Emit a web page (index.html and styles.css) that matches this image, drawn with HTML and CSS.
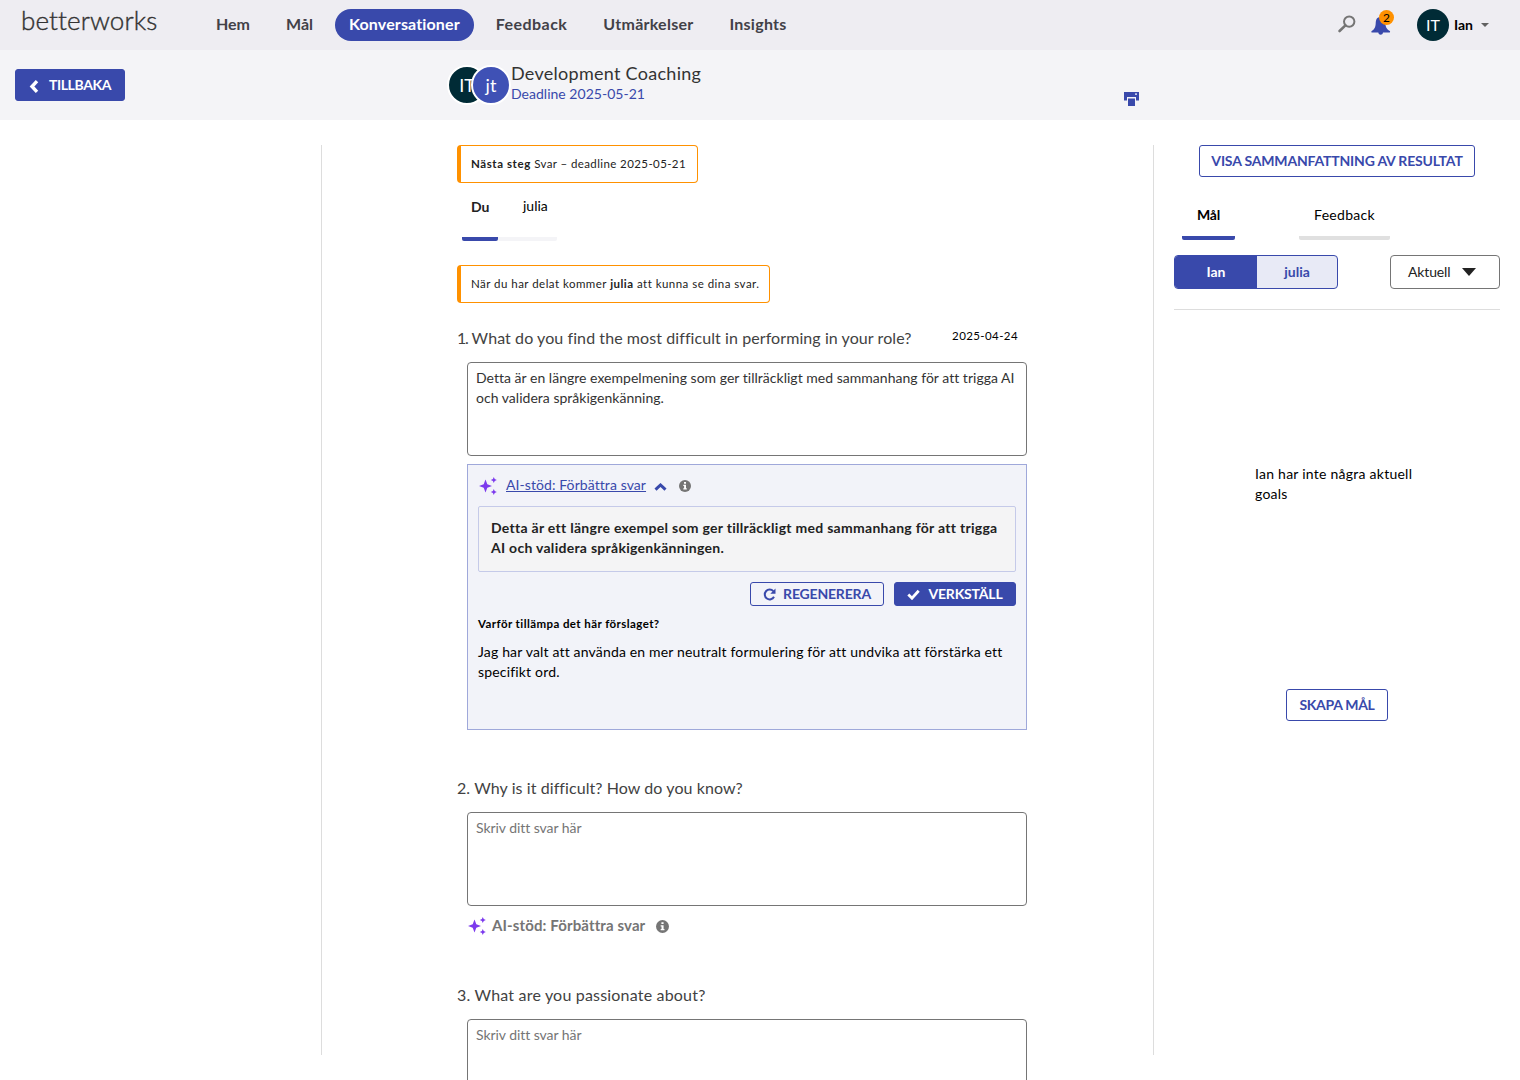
FILE: index.html
```html
<!DOCTYPE html>
<html lang="sv">
<head>
<meta charset="utf-8">
<title>Development Coaching</title>
<link rel="stylesheet" href="styles.css">
</head>
<body>
<svg class="sprite" width="0" height="0" aria-hidden="true">
  <symbol id="sparkle" viewBox="0 0 18 18">
    <path d="M6.5 2.600 8.300 7.200 13 9 8.300 10.800 6.500 15.400 4.700 10.800 0 9 4.700 7.200Z"/>
    <path d="M14.800 0 15.700 2.100 17.800 3 15.700 3.900 14.800 6 13.900 3.900 11.800 3 13.900 2.100Z"/>
    <path d="M14.800 12 15.700 14.100 17.800 15 15.700 15.900 14.800 18 13.900 15.900 11.800 15 13.900 14.100Z"/>
  </symbol>
  <symbol id="info" viewBox="0 0 12 12">
    <circle cx="6" cy="6" r="6"/>
    <path fill="#fff" d="M5 2h2v1.700H5zM4.300 4.800H7v3.400h.8v1.200H4.300V8.200h.8V6h-.8z"/>
  </symbol>
</svg>

<header class="topbar">
  <div class="logo">betterworks</div>
  <nav class="nav">
    <a>Hem</a>
    <a>Mål</a>
    <a class="active">Konversationer</a>
    <a class="wide">Feedback</a>
    <a>Utmärkelser</a>
    <a>Insights</a>
  </nav>
  <div class="tools">
    <svg class="search" width="18" height="18" viewBox="0 0 18 18"><circle cx="11.200" cy="6.600" r="5.200" fill="none" stroke="#757575" stroke-width="2"/><path d="M7.400 10.400 1.600 16" stroke="#757575" stroke-width="2.600" stroke-linecap="round"/></svg>
    <div class="bell">
      <svg width="20" height="19" viewBox="0 0 20 19"><path fill="#3949ab" d="M9 0c3.700.4 5.200 3 5.400 6.500.2 3.300 1 5.500 4.400 7.500.6.600.3 1.600-.6 1.600h-6.200c-.3 3-4.300 3-4.700 0H1.200C.3 15.600 0 14.600.7 14 4 12 4.400 9.800 4.700 6.500 4.900 3 5.500.4 9 0Z"/></svg>
      <span class="badge">2</span>
    </div>
    <div class="avatar me">IT</div>
    <span class="me-name">Ian</span>
    <i class="caret"></i>
  </div>
</header>

<section class="subbar">
  <button class="btn solid back"><svg width="10" height="14" viewBox="0 0 10 14"><path d="M8 2.200 3 7.500l5 5.300" fill="none" stroke="#fff" stroke-width="3.400"/></svg>TILLBAKA</button>
  <div class="conversation">
    <div class="pair"><div class="avatar">IT</div><div class="avatar second">jt</div></div>
    <div class="heading">
      <h1>Development Coaching</h1>
      <p>Deadline 2025-05-21</p>
    </div>
  </div>
  <svg class="print" width="15" height="14" viewBox="0 0 15 14"><path fill="#3949ab" d="M0 0h15v8.500h-3V5H3v3.500H0zM4 6.500h7V14H4z"/><path fill="#c5cae9" d="M11 1.300h2v1.700h-2z"/></svg>
</section>

<main class="columns">
  <aside class="left"></aside>
  <section class="center">
    <div class="note n1"><b>Nästa steg</b> Svar – deadline 2025-05-21</div>
    <div class="people">
      <div class="person on">Du</div>
      <div class="person">julia</div>
    </div>
    <div class="note n2">När du har delat kommer <b>julia</b> att kunna se dina svar.</div>

    <article class="question q1">
      <div class="q-head"><h2><span class="num">1.</span> What do you find the most difficult in performing in your role?</h2><time>2025-04-24</time></div>
      <div class="answer">Detta är en längre exempelmening som ger tillräckligt med sammanhang för att trigga AI<br>och validera språkigenkänning.</div>
      <div class="ai-panel">
        <div class="ai-row">
          <svg class="sparkle" width="18" height="18"><use href="#sparkle"/></svg>
          <a>AI-stöd: Förbättra svar</a>
          <svg class="chev" width="13" height="8" viewBox="0 0 13 8"><path d="M1.500 6.700 6.500 2l5 4.700" fill="none" stroke="#3949ab" stroke-width="3"/></svg>
          <svg class="info" width="12" height="12"><use href="#info"/></svg>
        </div>
        <div class="suggestion">Detta är ett längre exempel som ger tillräckligt med sammanhang för att trigga<br>AI och validera språkigenkänningen.</div>
        <div class="actions">
          <button class="btn outline small"><svg width="13" height="13" viewBox="0 0 13 13"><path d="M10.300 3.200A4.900 4.900 0 1 0 11 8.800" fill="none" stroke="#3949ab" stroke-width="2"/><path fill="#3949ab" d="M12.500.500v5.200H7.300z"/></svg>REGENERERA</button>
          <button class="btn solid small"><svg width="13" height="11" viewBox="0 0 13 11"><path d="M1.300 5.500 5 9.200 11.700 1.800" fill="none" stroke="#fff" stroke-width="2.800"/></svg>VERKSTÄLL</button>
        </div>
        <h3>Varför tillämpa det här förslaget?</h3>
        <p class="why">Jag har valt att använda en mer neutralt formulering för att undvika att förstärka ett<br>specifikt ord.</p>
      </div>
    </article>

    <article class="question q2">
      <div class="q-head"><h2>2. Why is it difficult? How do you know?</h2></div>
      <div class="answer empty">Skriv ditt svar här</div>
      <div class="ai-row off">
        <svg class="sparkle" width="18" height="18"><use href="#sparkle"/></svg>
        <span>AI-stöd: Förbättra svar</span>
        <svg class="info" width="13" height="13"><use href="#info"/></svg>
      </div>
    </article>

    <article class="question q3">
      <div class="q-head"><h2>3. What are you passionate about?</h2></div>
      <div class="answer empty">Skriv ditt svar här</div>
    </article>
  </section>

  <aside class="right">
    <button class="btn outline summary">VISA SAMMANFATTNING AV RESULTAT</button>
    <div class="tabs"><div class="tab on">Mål</div><div class="tab">Feedback</div></div>
    <div class="filters">
      <div class="toggle"><div class="on">Ian</div><div>julia</div></div>
      <div class="select">Aktuell<i></i></div>
    </div>
    <p class="none">Ian har inte några aktuell<br>goals</p>
    <button class="btn outline create">SKAPA MÅL</button>
  </aside>
</main>
</body>
</html>
```
FILE: styles.css
```css
* { box-sizing: border-box; }
body { margin: 0; width: 1520px; height: 1080px; overflow: hidden; background: #fff; color: #000; font: 14px/20px Lato, "Open Sans", sans-serif; }
h1, h2, h3, p { margin: 0; font-weight: 400; }
.sprite { position: absolute; }
svg { flex: none; display: block; }

.topbar { display: flex; height: 50px; background: #eeedf2; }
.logo { width: 202px; padding: 7px 0 0 21px; font-size: 26px; line-height: 27px; font-weight: 300; letter-spacing: .1px; color: #333; -webkit-text-stroke: .4px #333; }
.nav { display: flex; gap: 8px; padding-top: 9px; }
.nav a { height: 32px; padding: 0 14px; border-radius: 16px; font-size: 16px; line-height: 29px; font-weight: 700; letter-spacing: .25px; color: #424148; white-space: nowrap; }
.nav a:nth-child(-n+2) { letter-spacing: 0; }
.nav .active { background: #3949ab; color: #fff; letter-spacing: .13px; }
.nav .wide { letter-spacing: .45px; }
.tools { display: flex; align-items: center; margin-left: auto; padding-right: 31px; }
.search { margin: 0 15px 2px 0; }
.bell { position: relative; width: 20px; margin-right: 26px; padding-top: 2px; }
.badge { position: absolute; left: 8px; top: -5px; width: 15px; height: 15px; border-radius: 50%; background: #ff9100; font-size: 12px; line-height: 15px; text-align: center; }
.avatar { display: flex; align-items: center; justify-content: center; border-radius: 50%; background: #002b36; color: #fff; font-size: 16px; }
.me { width: 32px; height: 32px; padding-bottom: 1px; }
.me-name { margin: -1px 0 0 5px; font-weight: 700; }
.caret { margin-left: 8px; border: 4px solid transparent; border-top-color: #616161; border-bottom: 0; }

.subbar { display: flex; height: 70px; background: #f4f4f7; }
.btn { display: flex; align-items: center; justify-content: center; border: 1px solid #3949ab; border-radius: 3px; padding: 0; height: 32px; font: 700 14px/20px Lato, "Open Sans", sans-serif; letter-spacing: -.18px; white-space: nowrap; }
.solid { background: #3949ab; color: #fff; }
.outline { background: transparent; color: #3949ab; }
.back { width: 110px; margin: 19px 322px 0 15px; gap: 10px; letter-spacing: -.4px; }
.back svg { margin-top: 2px; }
.conversation { display: flex; width: 677px; }
.pair { display: flex; padding-top: 15px; }
.pair .avatar { width: 40px; height: 40px; border: 2px solid #fff; font-size: 18px; }
.pair .second { margin-left: -16px; background: #3f51b5; }
.heading h1 { padding-top: 12px; font-size: 18px; line-height: 23px; letter-spacing: .28px; color: #333; }
.heading p { padding-top: 1px; line-height: 16px; letter-spacing: .02px; color: #3949ab; }
.print { margin-top: 42px; }

.columns { display: grid; grid-template-columns: 322px 832px 366px; height: 960px; padding-top: 25px; overflow: hidden; }
.left, .center { height: 910px; border-right: 1px solid #ddd; }
.center { padding-left: 135px; }
.note { height: 38px; border: 1px solid #ff9100; border-left-width: 4px; border-radius: 4px; padding-left: 10px; font-size: 11.5px; line-height: 36px; color: #222; white-space: nowrap; }
.n1 { width: 241px; letter-spacing: .4px; }
.n1 b { letter-spacing: .58px; }
.n2 { width: 313px; letter-spacing: .47px; }
.people { display: flex; height: 58px; margin: 0 0 24px 5px; }
.person { width: 59px; border-bottom: 4px solid #f4f4f7; border-radius: 0 0 2px 2px; padding: 13px 0 0 25px; line-height: 20px; }
.person.on { width: 36px; padding: 14px 0 0 9px; border-color: #3949ab; font-weight: 700; letter-spacing: -.1px; color: #222; }
.question { width: 570px; }
.q-head { display: flex; justify-content: space-between; height: 39px; padding-top: 3px; }
.q-head h2 { font-size: 16px; line-height: 24px; letter-spacing: .08px; color: #424242; white-space: nowrap; }
.q1 .num { letter-spacing: -1.2px; }
.q-head time { padding: 1px 9px 0 0; font-size: 11.5px; line-height: 18px; letter-spacing: .4px; }
.q1 { margin-top: 20px; height: 450px; }
.q2 { height: 207px; }
.q3 h2 { letter-spacing: .19px; }
.answer { margin-left: 10px; width: 560px; height: 94px; border: 1px solid #757575; border-radius: 4px; padding: 5px 8px; letter-spacing: .02px; color: #333; white-space: nowrap; }
.empty { letter-spacing: -.06px; color: #757575; }
.ai-panel { width: 560px; height: 266px; margin: 8px 0 0 10px; border: 1px solid #9fa8da; background: #f2f3f9; padding: 12px 10px 0; white-space: nowrap; }
.ai-row { display: flex; align-items: center; height: 18px; }
.sparkle { fill: #7c3aed; margin-left: 1px; }
.ai-row a { margin: -2px 0 0 9px; color: #3949ab; letter-spacing: .08px; text-decoration: underline; }
.info { fill: #757575; }
.chev { margin: 2px 12px 0 8px; }
.suggestion { margin-top: 11px; height: 66px; border: 1px solid #c5cae9; border-radius: 2px; background: #f4f4f5; padding: 11px 12px; font-weight: 700; letter-spacing: .28px; color: #222; }
.actions { display: flex; justify-content: flex-end; gap: 10px; margin-top: 10px; }
.small { height: 24px; width: 134px; gap: 7px; padding-bottom: 1px; }
.small svg { margin-top: 1px; }
.small.solid { width: 122px; gap: 8px; }
.ai-panel h3 { margin-top: 9px; font-size: 11.5px; line-height: 18px; font-weight: 700; letter-spacing: .42px; }
.why { margin-top: 9px; letter-spacing: .17px; }
.off { margin: 11px 0 0 10px; font-size: 15px; font-weight: 700; letter-spacing: .12px; color: #757575; }
.off span { margin: -2px 11px 0 6px; }

.right { padding: 0 20px; }
.summary { width: 276px; margin-left: 25px; }
.tabs { display: flex; gap: 64px; margin: 15px 0 15px 8px; }
.tab { width: 91px; height: 48px; padding-top: 13px; border-bottom: 4px solid #e0e0e0; border-radius: 2px; letter-spacing: .3px; text-align: center; }
.tab.on { width: 53px; border-color: #3949ab; font-weight: 700; letter-spacing: -.2px; }
.filters { display: flex; justify-content: space-between; padding-bottom: 20px; border-bottom: 1px solid #ddd; }
.toggle { display: flex; width: 164px; height: 34px; border: 1px solid #3949ab; border-radius: 4px; background: #e8eaf6; color: #3949ab; font-weight: 700; line-height: 31px; text-align: center; overflow: hidden; }
.toggle div { width: 80px; }
.toggle .on { width: 82px; background: #3949ab; color: #fff; }
.select { display: flex; align-items: center; width: 110px; height: 34px; padding: 0 0 1px 17px; border: 1px solid #757575; border-radius: 4px; letter-spacing: -.15px; color: #222; }
.select i { margin: 1px 0 0 12px; border: 7px solid transparent; border-top: 8px solid #222; border-bottom: 0; }
.none { margin: 154px 0 0 81px; letter-spacing: .25px; }
.create { width: 102px; margin: 185px 0 0 112px; letter-spacing: -.3px; }
```
